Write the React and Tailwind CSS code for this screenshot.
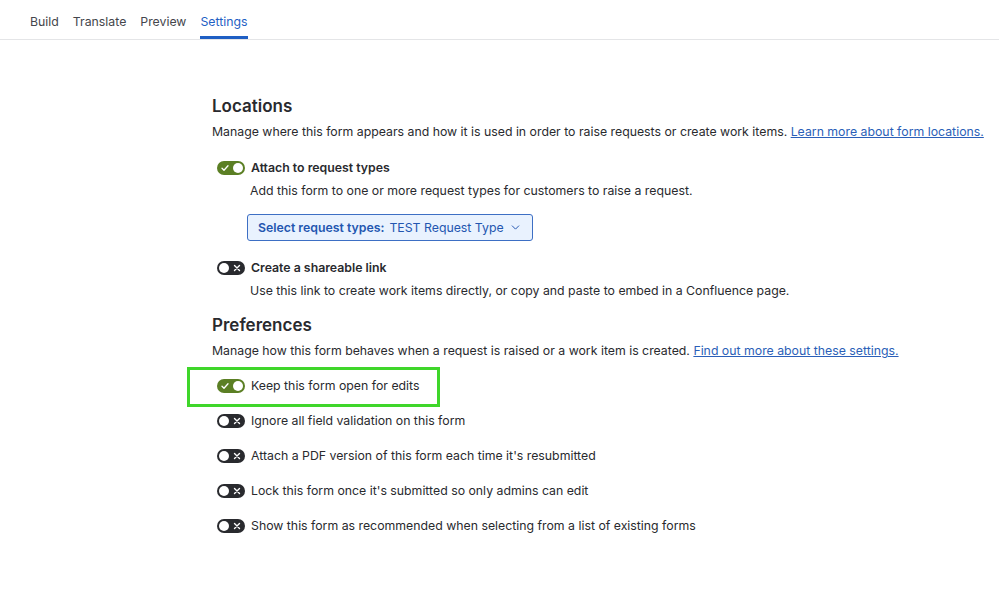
import { ChevronDown } from "lucide-react";

function Toggle({ on }) {
  if (on) {
    return (
      <span className="relative inline-flex h-[14px] w-[28px] shrink-0 items-center rounded-full bg-[#5b7f24]">
        <svg className="absolute left-[4px] top-[3px]" width="8" height="8" viewBox="0 0 8 8">
          <path d="M1 4.2 L3 6.2 L7 1.8" fill="none" stroke="white" strokeWidth="1.3" strokeLinecap="round" strokeLinejoin="round" />
        </svg>
        <span className="absolute right-[2px] top-[2px] h-[10px] w-[10px] rounded-full bg-white" />
      </span>
    );
  }
  return (
    <span className="relative inline-flex h-[14px] w-[28px] shrink-0 items-center rounded-full bg-[#292a2e]">
      <span className="absolute left-[2px] top-[2px] h-[10px] w-[10px] rounded-full bg-white" />
      <svg className="absolute right-[4px] top-[3px]" width="8" height="8" viewBox="0 0 8 8">
        <path d="M1.5 1.5 L6.5 6.5 M6.5 1.5 L1.5 6.5" fill="none" stroke="white" strokeWidth="1.4" strokeLinecap="round" />
      </svg>
    </span>
  );
}

function Row({ on, label, bold, highlight }) {
  return (
    <div className="relative flex h-[35px] items-center gap-[6px] pl-[5px]">
      {highlight && (
        <div className="pointer-events-none absolute left-[-25px] top-[-1px] h-[40px] w-[253px] border-[3px] border-[#3fd62a]" />
      )}
      <Toggle on={on} />
      <span className={bold ? "font-semibold" : ""}>{label}</span>
    </div>
  );
}

export default function App() {
  const tabs = ["Build", "Translate", "Preview", "Settings"];
  const prefs = [
    { on: true, label: "Keep this form open for edits", highlight: true },
    { on: false, label: "Ignore all field validation on this form" },
    { on: false, label: "Attach a PDF version of this form each time it's resubmitted" },
    { on: false, label: "Lock this form once it's submitted so only admins can edit" },
    { on: false, label: "Show this form as recommended when selecting from a list of existing forms" },
  ];

  return (
    <div className="min-h-screen bg-white text-[12.3px] text-[#292a2e]" style={{ fontFamily: "Inter, 'Noto Sans', sans-serif" }}>
      <div className="flex gap-[14px] border-b border-[#e4e5e7] pl-[30px]">
        {tabs.map((t) => (
          <div
            key={t}
            className={
              t === "Settings"
                ? "border-b-[3px] border-[#1f5fc4] pb-[5px] pt-[13px] text-[#1f5fc4]"
                : "border-b-[3px] border-transparent pb-[5px] pt-[13px] text-[#44464c]"
            }
          >
            {t}
          </div>
        ))}
      </div>

      <div className="pl-[212px] pt-[54px]">
        <h2 className="text-[17px] font-semibold leading-[24px]">Locations</h2>
        <p className="mt-[4px] leading-[20px]">
          Manage where this form appears and how it is used in order to raise requests or create work items.{" "}
          <a className="text-[#2b5fb8] underline">Learn more about form locations.</a>
        </p>
        <div className="mt-[8px]">
          <Row on label="Attach to request types" bold />
          <p className="pl-[38px] leading-[12px]">Add this form to one or more request types for customers to raise a request.</p>
          <div className="mt-[17px] pl-[35px]">
            <button className="flex h-[27px] items-center gap-[5px] rounded-[3px] border border-[#3d6fc4] bg-[#e9f2fe] px-[10px] text-[#2356b0]">
              <span className="font-semibold">Select request types:</span>
              <span>TEST Request Type</span>
              <ChevronDown size={13} strokeWidth={1.8} />
            </button>
          </div>
          <div className="mt-[9px]">
            <Row on={false} label="Create a shareable link" bold />
          </div>
          <p className="pl-[38px] leading-[12px]">Use this link to create work items directly, or copy and paste to embed in a Confluence page.</p>
        </div>

        <h2 className="mt-[16px] text-[17px] font-semibold leading-[24px]">Preferences</h2>
        <p className="mt-[4px] leading-[20px]">
          Manage how this form behaves when a request is raised or a work item is created.{" "}
          <a className="text-[#2b5fb8] underline">Find out more about these settings.</a>
        </p>
        <div className="mt-[7px]">
          {prefs.map((p) => (
            <Row key={p.label} on={p.on} label={p.label} highlight={p.highlight} />
          ))}
        </div>
      </div>
    </div>
  );
}
